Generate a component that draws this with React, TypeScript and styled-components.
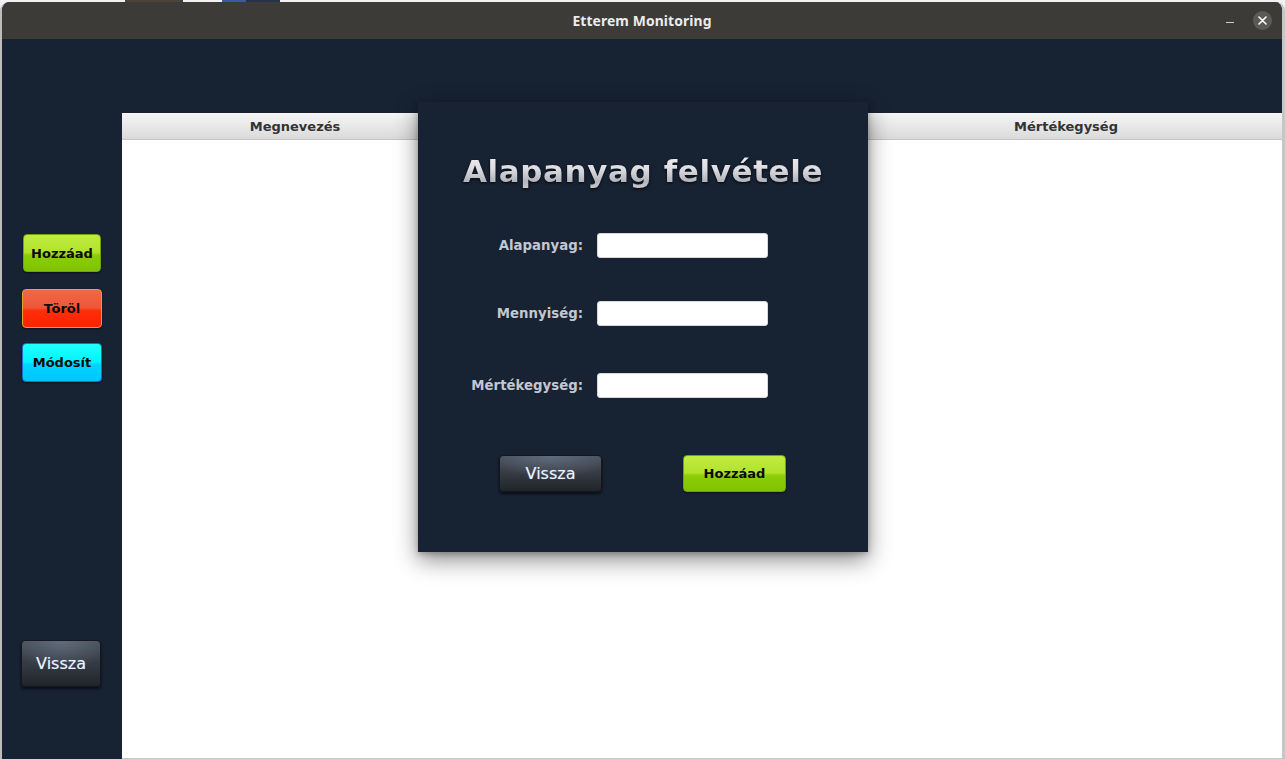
import React from "react";
import styled, { createGlobalStyle, css } from "styled-components";

const Global = createGlobalStyle`
  html, body { margin: 0; padding: 0; }
  body { width: 1285px; height: 759px; overflow: hidden; background: #ececec; font-family: "DejaVu Sans", "Noto Sans", sans-serif; }
  * { box-sizing: border-box; }
`;

const Page = styled.div`
  width: 1285px;
  height: 759px;
  display: flex;
  flex-direction: column;
  background: #efefef;
`;

const DesktopStrip = styled.div`
  height: 2px;
  display: flex;
  flex: none;
`;

const StripBlock = styled.div<{ $w: number; $c: string }>`
  width: ${(p) => p.$w}px;
  background: ${(p) => p.$c};
`;

const Window = styled.div`
  flex: 1;
  display: flex;
  flex-direction: column;
  border-left: 2px solid #bdbdbd;
  border-right: 3px solid #c6c6c6;
  border-radius: 9px 9px 0 0;
  overflow: hidden;
  background: #172233;
`;

const TitleBar = styled.div`
  height: 37px;
  flex: none;
  background: #3d3b38;
  display: flex;
  align-items: center;
  justify-content: center;
  position: relative;
`;

const TitleText = styled.div`
  font-family: "Noto Sans", "DejaVu Sans", sans-serif;
  font-weight: 700;
  font-size: 13.9px;
  color: #ececec;
  letter-spacing: 0.1px;
`;

const WinControls = styled.div`
  position: absolute;
  right: 10px;
  top: 0;
  height: 37px;
  display: flex;
  align-items: center;
  gap: 19px;
`;

const MinBtn = styled.div`
  width: 8px;
  height: 1px;
  background: #cfcfcf;
  margin-top: 3px;
`;

const CloseBtn = styled.div`
  width: 19px;
  height: 19px;
  border-radius: 50%;
  background: #5c5a57;
  display: flex;
  align-items: center;
  justify-content: center;
`;

const Content = styled.div`
  flex: 1;
  display: flex;
  position: relative;
  min-height: 0;
`;

const Sidebar = styled.div`
  width: 120px;
  flex: none;
  display: flex;
  flex-direction: column;
  padding: 195px 0 72px 20px;
`;

const btnBase = css`
  font-family: "DejaVu Sans", sans-serif;
  font-weight: 700;
  font-size: 13px;
  color: #0b0b0b;
  border-radius: 4px;
  display: flex;
  align-items: center;
  justify-content: center;
  cursor: pointer;
`;

type Variant = "green" | "red" | "cyan";

const variants: Record<Variant, string> = {
  green: `
    background: linear-gradient(#c0ec40 0%, #b2e22c 48%, #8ccd08 56%, #7fc300 100%);
    border: 1px solid #6fa60a;
    box-shadow: 0 1px 2px rgba(0,0,0,0.5);
  `,
  red: `
    background: linear-gradient(#f06848 0%, #ee5638 48%, #ff2e08 56%, #ff2200 100%);
    border: 1px solid #e8a030;
    box-shadow: 0 1px 2px rgba(0,0,0,0.5);
  `,
  cyan: `
    background: linear-gradient(#20ffff 0%, #00f4ff 48%, #00d4ff 56%, #00c4ff 100%);
    border: 1px solid #1a70c8;
    box-shadow: 0 1px 2px rgba(0,0,0,0.5);
  `,
};

const ColorButton = styled.div<{ $v: Variant; $w: number; $h: number; $mt?: number; $ml?: number }>`
  ${btnBase}
  width: ${(p) => p.$w}px;
  height: ${(p) => p.$h}px;
  margin-top: ${(p) => p.$mt ?? 0}px;
  margin-left: ${(p) => p.$ml ?? 0}px;
  ${(p) => variants[p.$v]}
`;

const DarkButton = styled.div<{ $w: number; $h: number; $mt?: string; $ml?: number }>`
  width: ${(p) => p.$w}px;
  height: ${(p) => p.$h}px;
  margin-top: ${(p) => p.$mt ?? "0"};
  margin-left: ${(p) => p.$ml ?? 0}px;
  border-radius: 4px;
  background:
    radial-gradient(ellipse 70% 60% at 50% 0%, rgba(120,135,155,0.55), rgba(120,135,155,0) 100%),
    linear-gradient(#444c57 0%, #353b44 50%, #20242a 100%);
  border: 1px solid #14171c;
  box-shadow: 0 2px 3px rgba(0,0,0,0.6);
  display: flex;
  align-items: center;
  justify-content: center;
  font-family: "DejaVu Sans", sans-serif;
  font-size: 16px;
  color: #eef3fb;
  text-shadow: 0 0 1px rgba(150,190,255,0.6);
  cursor: pointer;
`;

const Main = styled.div`
  flex: 1;
  display: flex;
  flex-direction: column;
  padding-top: 74px;
  min-width: 0;
`;

const Table = styled.div`
  flex: 1;
  background: #ffffff;
  display: flex;
  flex-direction: column;
  border-bottom: 1px solid #c8c8c8;
`;

const HeaderRow = styled.div`
  height: 27px;
  flex: none;
  display: flex;
  background: linear-gradient(#f4f4f4 0%, #e8e8e8 50%, #dadada 100%);
  border-top: 1px solid #f8f8f8;
  border-bottom: 1px solid #c4c4c4;
`;

const HeaderCell = styled.div<{ $w: number }>`
  width: ${(p) => p.$w}px;
  flex: none;
  display: flex;
  align-items: center;
  justify-content: center;
  font-family: "DejaVu Sans", sans-serif;
  font-weight: 700;
  font-size: 13px;
  color: #333333;
`;

const Dialog = styled.div`
  position: absolute;
  left: 416px;
  top: 63px;
  width: 450px;
  height: 450px;
  background: #172233;
  box-shadow: 0 8px 22px rgba(0, 0, 0, 0.45), 0 2px 6px rgba(0,0,0,0.25);
  display: flex;
  flex-direction: column;
`;

const DialogTitle = styled.div`
  margin-top: 49px;
  height: 40px;
  line-height: 40px;
  text-align: center;
  font-family: "DejaVu Sans", sans-serif;
  font-weight: 700;
  font-size: 31px;
  letter-spacing: 0.6px;
  background: linear-gradient(#f4f4f6 0%, #dcdce2 45%, #b4b4bc 75%, #d0d0d6 100%);
  -webkit-background-clip: text;
  background-clip: text;
  color: transparent;
  filter: drop-shadow(0 1px 1.5px rgba(0, 0, 0, 0.8));
`;

const Form = styled.div`
  margin-top: 42px;
  display: flex;
  flex-direction: column;
`;

const FieldRow = styled.div<{ $mt: number }>`
  display: flex;
  align-items: center;
  gap: 14px;
  margin-top: ${(p) => p.$mt}px;
`;

const Label = styled.label`
  width: 165px;
  text-align: right;
  font-family: "DejaVu Sans", sans-serif;
  font-weight: 700;
  font-size: 13.3px;
  color: #c3c7cf;
`;

const Input = styled.input`
  width: 171px;
  height: 25px;
  border: 1px solid #d8d8d8;
  border-radius: 3px;
  background: #ffffff;
  outline: none;
  padding: 0 4px;
`;

const ButtonRow = styled.div`
  display: flex;
  gap: 81px;
  padding-left: 81px;
  margin-top: 57px;
`;

export default function App() {
  return (
    <>
      <Global />
      <Page>
        <DesktopStrip>
          <StripBlock $w={125} $c="#f2f2f2" />
          <StripBlock $w={58} $c="#4a4438" />
          <StripBlock $w={39} $c="#f2f2f2" />
          <StripBlock $w={24} $c="#3a5aa8" />
          <StripBlock $w={34} $c="#26324a" />
          <StripBlock $w={1005} $c="#f2f2f2" />
        </DesktopStrip>
        <Window>
          <TitleBar>
            <TitleText>Etterem Monitoring</TitleText>
            <WinControls>
              <MinBtn />
              <CloseBtn>
                <svg width="9" height="9" viewBox="0 0 9 9">
                  <path d="M1 1 L8 8 M8 1 L1 8" stroke="#ffffff" strokeWidth="1.6" strokeLinecap="round" />
                </svg>
              </CloseBtn>
            </WinControls>
          </TitleBar>
          <Content>
            <Sidebar>
              <ColorButton $v="green" $w={78} $h={38} $ml={1}>Hozzáad</ColorButton>
              <ColorButton $v="red" $w={80} $h={39} $mt={17}>Töröl</ColorButton>
              <ColorButton $v="cyan" $w={80} $h={39} $mt={15}>Módosít</ColorButton>
              <DarkButton $w={80} $h={47} $mt="auto" $ml={-1}>Vissza</DarkButton>
            </Sidebar>
            <Main>
              <Table>
                <HeaderRow>
                  <HeaderCell $w={346}>Megnevezés</HeaderCell>
                  <HeaderCell $w={383}>Mennyiség</HeaderCell>
                  <HeaderCell $w={430}>Mértékegység</HeaderCell>
                </HeaderRow>
              </Table>
            </Main>
            <Dialog>
              <DialogTitle>Alapanyag felvétele</DialogTitle>
              <Form>
                <FieldRow $mt={0}>
                  <Label>Alapanyag:</Label>
                  <Input />
                </FieldRow>
                <FieldRow $mt={43}>
                  <Label>Mennyiség:</Label>
                  <Input />
                </FieldRow>
                <FieldRow $mt={47}>
                  <Label>Mértékegység:</Label>
                  <Input />
                </FieldRow>
              </Form>
              <ButtonRow>
                <DarkButton $w={103} $h={37}>Vissza</DarkButton>
                <ColorButton $v="green" $w={103} $h={37}>Hozzáad</ColorButton>
              </ButtonRow>
            </Dialog>
          </Content>
        </Window>
      </Page>
    </>
  );
}
